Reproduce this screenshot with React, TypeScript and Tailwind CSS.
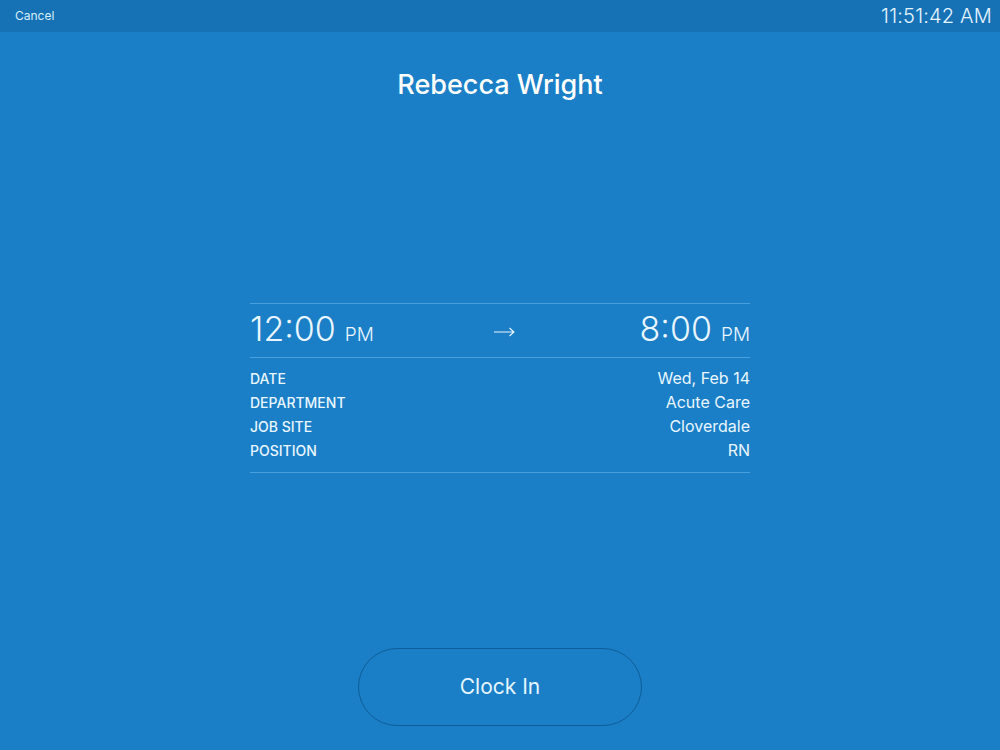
export default function App() {
  const rows = [
    ['DATE', 'Wed, Feb 14'],
    ['DEPARTMENT', 'Acute Care'],
    ['JOB SITE', 'Cloverdale'],
    ['POSITION', 'RN'],
  ]
  return (
    <div className="w-[1000px] h-[750px] flex flex-col bg-[#1a7fc6] text-[#eaf6ff] font-['Inter','Liberation_Sans',sans-serif] overflow-hidden">
      {/* top bar */}
      <div className="h-8 shrink-0 flex items-center justify-between bg-[#1672b5] pl-[15px] pr-[8px]">
        <span className="text-[12px] text-[#d7eefc]">Cancel</span>
        <span className="text-[20px] font-light text-[#e6f4ff] tracking-[0.2px]">11:51:42 AM</span>
      </div>

      <div className="flex-1 flex flex-col items-center">
        <h1 className="mt-[37px] text-[27px] font-medium leading-[32px] text-white">Rebecca Wright</h1>

        {/* shift details */}
        <div className="mt-[202px] w-[500px] flex flex-col">
          <div className="h-px bg-[#4aa0dc]" />
          <div className="h-[53px] flex items-center justify-between">
            <div className="flex items-baseline gap-[9px]">
              <span className="text-[34px] font-light leading-none">12:00</span>
              <span className="text-[19px] font-light">PM</span>
            </div>
            <svg width="21" height="10" viewBox="0 0 21 10" className="-ml-[4px] mt-[2px]" fill="none" stroke="currentColor" strokeWidth="1.1">
              <path d="M0 5h20M15.5 1l4.5 4-4.5 4" />
            </svg>
            <div className="flex items-baseline gap-[9px]">
              <span className="text-[34px] font-light leading-none">8:00</span>
              <span className="text-[19px] font-light">PM</span>
            </div>
          </div>
          <div className="h-px bg-[#4aa0dc]" />
          <div className="pt-[8px] pb-[10px] flex flex-col">
            {rows.map(([k, v]) => (
              <div key={k} className="h-6 flex items-center justify-between">
                <span className="text-[14px] font-medium">{k}</span>
                <span className="text-[16px]">{v}</span>
              </div>
            ))}
          </div>
          <div className="h-px bg-[#4aa0dc]" />
        </div>

        <button className="mt-[175px] w-[284px] h-[78px] rounded-full border border-[#0f5d99] bg-[#1a7fc6] text-[21px] text-[#e6f5ff]">
          Clock In
        </button>
      </div>
    </div>
  )
}
